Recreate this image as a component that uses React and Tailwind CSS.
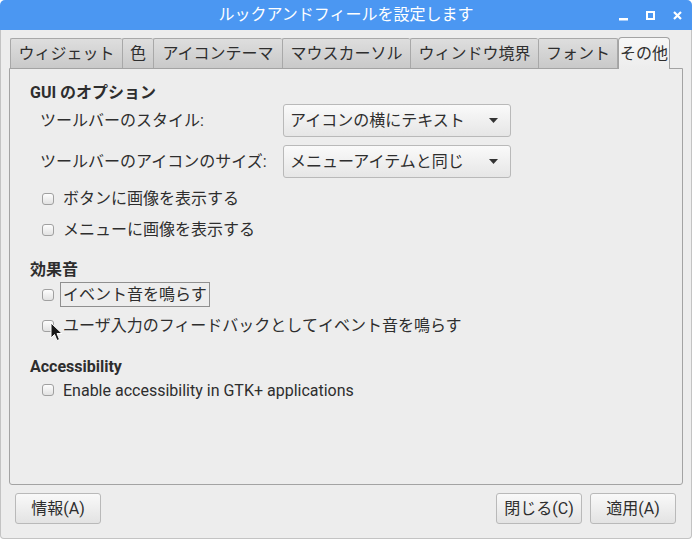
import React from "react";

const font = { fontFamily: "Roboto, 'Noto Sans CJK JP', sans-serif" };

function Tab({ label, w, active, last }) {
  if (active) {
    return (
      <div className={`${w} h-[32px] flex items-center justify-center border border-b-0 border-[#a3a3a3] rounded-t-[4px] bg-gradient-to-b from-[#f7f7f7] to-[#ededed] text-[16px] text-[#2e2e2e]`}>
        {label}
      </div>
    );
  }
  return (
    <div className={`${w} h-[30px] mb-[1px] flex items-center justify-center border-t border-l ${last ? "border-r" : ""} border-[#a8a8a8] rounded-t-[2px] bg-gradient-to-b from-[#dedede] to-[#c9c9c9] text-[16px] text-[#2e2e2e]`}>
      {label}
    </div>
  );
}

function Combo({ label }) {
  return (
    <div className="w-[228px] h-[33px] flex items-center justify-between pl-[6px] pr-[12px] border border-[#b9b9b9] rounded-[3px] bg-gradient-to-b from-[#fafafa] to-[#e6e6e6] text-[16px] text-[#2e2e2e]">
      <span>{label}</span>
      <svg width="9" height="5" viewBox="0 0 9 5">
        <path d="M0 0 H9 L4.5 5 Z" fill="#333" />
      </svg>
    </div>
  );
}

function Check({ label, focus, h = "h-[31px]", cursor }) {
  return (
    <div className={`${h} flex items-center pl-[12px] relative`}>
      <div className="w-[12px] h-[12px] border border-[#a0a0a0] rounded-[3px] bg-gradient-to-b from-[#fdfdfd] to-[#e2e2e2]" />
      <span className={`ml-[6px] text-[16px] text-[#2e2e2e] leading-[23px] px-[2px] border ${focus ? "border-[#8f8f8f]" : "border-transparent"}`}>
        {label}
      </span>
      {cursor && (
        <svg className="absolute left-[20px] top-[12px]" width="13" height="20" viewBox="0 0 13 20">
          <path d="M1 1 L1 16 L4.5 12.5 L7 18.5 L9.5 17.5 L7 11.5 L12 11.5 Z" fill="#1a1a1a" stroke="#fff" strokeWidth="1" />
        </svg>
      )}
    </div>
  );
}

function Button({ label, w }) {
  return (
    <div className={`${w} h-[31px] flex items-center justify-center border border-[#b9b9b9] rounded-[3px] bg-gradient-to-b from-[#f9f9f9] to-[#e3e3e3] text-[16px] text-[#2e2e2e]`}>
      {label}
    </div>
  );
}

export default function App() {
  return (
    <div className="w-[692px] h-[539px] flex flex-col bg-white" style={font}>
      {/* title bar */}
      <div className="h-[30px] relative flex items-center justify-center bg-[#4b97f2] rounded-t-[5px] text-white text-[16px]">
        ルックアンドフィールを設定します
        <div className="absolute right-[10px] top-[11px] flex items-end gap-[18px]">
          <svg width="9" height="10" viewBox="0 0 9 10">
            <rect x="0" y="7" width="9" height="2.5" fill="#fff" />
          </svg>
          <svg width="9" height="10" viewBox="0 0 9 10">
            <rect x="1" y="1" width="7" height="7" fill="none" stroke="#fff" strokeWidth="2" />
          </svg>
          <svg width="9" height="10" viewBox="0 0 9 10">
            <path d="M1 1 L8 8 M8 1 L1 8" stroke="#fff" strokeWidth="2.2" />
          </svg>
        </div>
      </div>

      {/* body */}
      <div className="flex-1 flex flex-col bg-[#ededed] border-x border-b border-[#c3c3c3] rounded-b-[4px] pt-[7px] px-[8px] pb-[14px]">
        <div className="flex items-end ml-[1px] -mb-px relative z-10">
          <Tab label="ウィジェット" w="w-[112px]" />
          <Tab label="色" w="w-[31px]" />
          <Tab label="アイコンテーマ" w="w-[129px]" />
          <Tab label="マウスカーソル" w="w-[128px]" />
          <Tab label="ウィンドウ境界" w="w-[128px]" />
          <Tab label="フォント" w="w-[80px]" last />
          <Tab label="その他" w="w-[52px]" active />
        </div>

        <div className="flex-1 flex flex-col border border-[#a3a3a3] rounded-b-[3px] pl-[20px] pt-[14px] text-[#2e2e2e]">
          <div className="h-[20px] flex items-center font-bold text-[16px]">GUI のオプション</div>
          <div className="mt-[1px] flex items-center">
            <span className="w-[253px] pl-[10px] text-[16px]">ツールバーのスタイル:</span>
            <Combo label="アイコンの横にテキスト" />
          </div>
          <div className="mt-[8px] flex items-center">
            <span className="w-[253px] pl-[10px] text-[16px]">ツールバーのアイコンのサイズ:</span>
            <Combo label="メニューアイテムと同じ" />
          </div>
          <div className="mt-[5px]">
            <Check label="ボタンに画像を表示する" />
            <Check label="メニューに画像を表示する" />
          </div>
          <div className="mt-[16px] h-[18px] flex items-center font-bold text-[16px]">効果音</div>
          <Check label="イベント音を鳴らす" focus />
          <Check label="ユーザ入力のフィードバックとしてイベント音を鳴らす" cursor />
          <div className="mt-[17px] h-[18px] flex items-center font-bold text-[16px]">Accessibility</div>
          <Check label="Enable accessibility in GTK+ applications" h="h-[28px]" />
        </div>

        <div className="mt-[8px] flex items-center pl-[6px] pr-[7px]">
          <Button label="情報(A)" w="w-[86px]" />
          <div className="flex-1" />
          <Button label="閉じる(C)" w="w-[86px]" />
          <div className="w-[8px]" />
          <Button label="適用(A)" w="w-[86px]" />
        </div>
      </div>
    </div>
  );
}
